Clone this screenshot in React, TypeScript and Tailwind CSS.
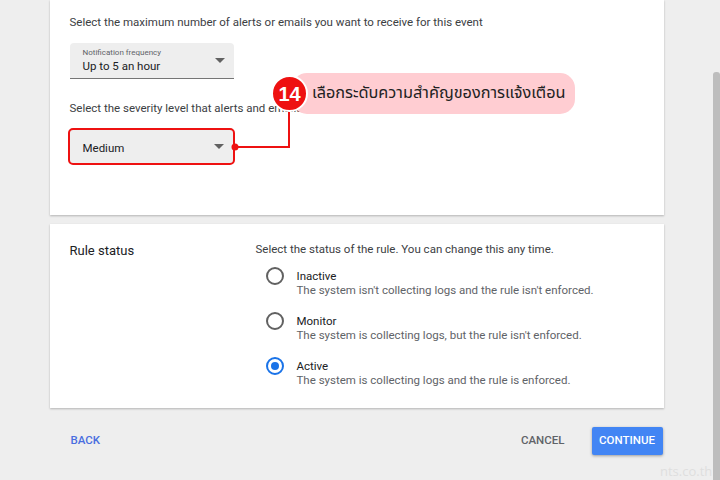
import React from 'react';

const Arrow: React.FC = () => (
  <svg width="10" height="5" viewBox="0 0 10 5" className="shrink-0">
    <path d="M0 0h10L5 5z" fill="#616161" />
  </svg>
);

const Radio: React.FC<{ checked?: boolean }> = ({ checked }) =>
  checked ? (
    <div className="w-[18px] h-[18px] rounded-full border-2 border-[#1a73e8] flex items-center justify-center">
      <div className="w-[8px] h-[8px] rounded-full bg-[#1a73e8]" />
    </div>
  ) : (
    <div className="w-[18px] h-[18px] rounded-full border-2 border-[#616161]" />
  );

const options = [
  { label: 'Inactive', desc: "The system isn't collecting logs and the rule isn't enforced." },
  { label: 'Monitor', desc: "The system is collecting logs, but the rule isn't enforced." },
  { label: 'Active', desc: 'The system is collecting logs and the rule is enforced.', checked: true },
];

export default function App() {
  return (
    <div className="relative w-[720px] h-[480px] bg-[#eeeeee] flex overflow-hidden font-['Roboto',sans-serif] text-[#3c4043]">
      <div className="flex-1 flex flex-col items-center">
        <div className="w-[614px] flex flex-col">
          {/* notification card */}
          <div className="h-[215px] bg-white shadow-[0_1px_2px_rgba(0,0,0,0.25)] pl-[20px] pt-[15px] flex flex-col">
            <p className="text-[11.5px] leading-[15px]">
              Select the maximum number of alerts or emails you want to receive for this event
            </p>
            <div className="mt-[13px] w-[164px] h-[36px] bg-[#eeeeee] rounded-t-[4px] border-b border-[#757575] pl-[13px] pr-[9px] flex items-center justify-between">
              <div className="flex flex-col">
                <span className="text-[8px] leading-[10px] text-[#5f6368]">Notification frequency</span>
                <span className="text-[11.5px] leading-[14px] mt-[1px] text-[#202124]">Up to 5 an hour</span>
              </div>
              <Arrow />
            </div>
            {/* the end of this sentence sits under the callout */}
            <p className="mt-[22px] text-[11.5px] leading-[15px]">
              Select the severity level that alerts and emails have
            </p>
            <div className="mt-[12px] -ml-[2px] w-[167px] h-[37px] bg-[#eeeeee] rounded-[5px] border-2 border-[#ee1111] pl-[13px] pr-[9px] flex items-center justify-between">
              <span className="text-[11.5px] leading-[14px] text-[#202124] mt-[2px]">Medium</span>
              <Arrow />
            </div>
          </div>

          {/* rule status card */}
          <div className="mt-[9px] h-[184px] bg-white shadow-[0_1px_2px_rgba(0,0,0,0.25)] pl-[20px] flex">
            <h2 className="w-[186px] pt-[19px] text-[13px] leading-[16px] text-[#202124]">Rule status</h2>
            <div className="pt-[18px] flex flex-col">
              <p className="text-[11.5px] leading-[15px]">Select the status of the rule. You can change this any time.</p>
              <div className="mt-[12px] flex flex-col gap-[16px]">
                {options.map((o) => (
                  <div key={o.label} className="flex items-start">
                    <div className="ml-[10px] mt-[-2px]">
                      <Radio checked={o.checked} />
                    </div>
                    <div className="ml-[13px] flex flex-col text-[11.5px] leading-[15px]">
                      <span className="text-[#202124]">{o.label}</span>
                      <span className="text-[#5f6368] -mt-[1px]">{o.desc}</span>
                    </div>
                  </div>
                ))}
              </div>
            </div>
          </div>

          {/* footer */}
          <div className="mt-[19px] flex items-center justify-between pl-[21px]">
            <span className="text-[11.5px] font-medium text-[#4a6ee0]">BACK</span>
            <div className="flex items-center gap-[11px] mr-[1px]">
              <span className="px-[16px] text-[11.5px] font-medium text-[#5f6368]">CANCEL</span>
              <button className="h-[28px] w-[71px] rounded-[2px] bg-[#4285f4] text-white text-[11.5px] font-medium shadow-[0_1px_3px_rgba(0,0,0,0.35)]">
                CONTINUE
              </button>
            </div>
          </div>
        </div>
      </div>
      <div className="w-[7px] mt-[72px] bg-[#bdbdbd] rounded-t-[3px]" />

      {/* annotation */}
      <svg className="absolute left-0 top-0 pointer-events-none" width="720" height="480">
        <path d="M235 147H289V105" fill="none" stroke="#ee1111" strokeWidth="2" />
        <circle cx="235" cy="147" r="3.5" fill="#ee1111" />
      </svg>
      <div className="absolute left-[271px] top-[73px] flex items-center">
        <div className="relative z-10 w-[37px] h-[37px] rounded-full bg-[#ee1111] border-2 border-white flex items-center justify-center text-white text-[20px] font-bold font-['Liberation_Sans',sans-serif]">
          14
        </div>
        <div className="-ml-[16px] pl-[20px] pr-[9px] h-[41px] flex items-center rounded-[15px] bg-[#ffcdd2] text-[16.3px] text-[#222] font-['Noto_Sans_Thai','Tahoma','DejaVu_Sans',sans-serif]">
          <span>เลือกระดับความสำคัญของการแจ้งเตือน</span>
        </div>
      </div>
      <span className="absolute left-[660px] top-[462px] text-[13px] text-[#dedede] font-['Open_Sans',sans-serif]">nts.co.th</span>
    </div>
  );
}
